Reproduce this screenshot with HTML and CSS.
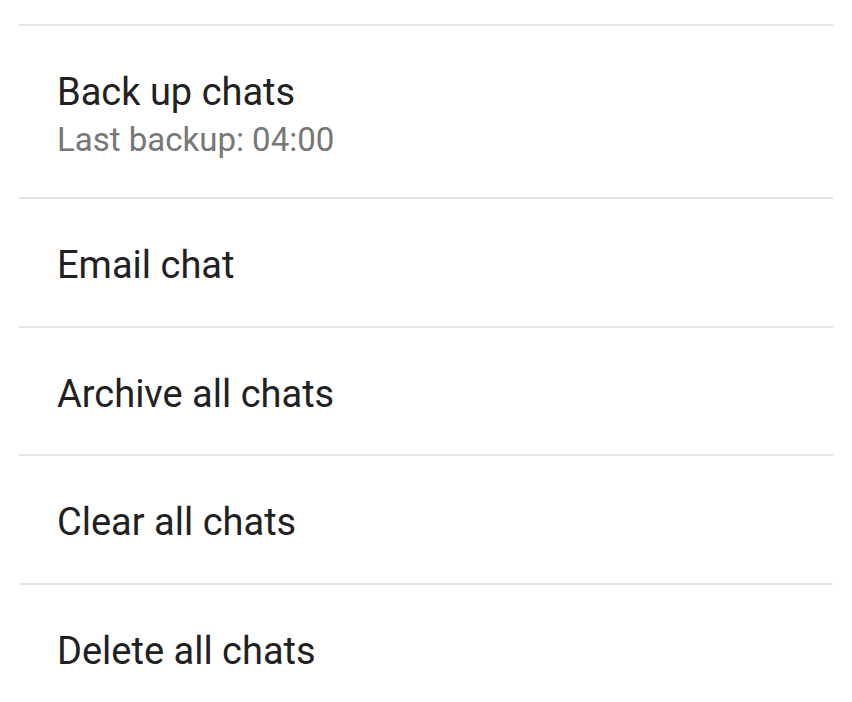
FILE: index.html
```html
<!DOCTYPE html>
<html lang="en">
<head>
    <meta charset="UTF-8">
    <meta name="viewport" content="width=device-width, initial-scale=1.0">
    <title>Chat settings</title>
    <link rel="stylesheet" href="styles.css">
</head>
<body>

<div class="settings-list">
    <div class="setting-item two-line">
        <div class="setting-title">Back up chats</div>
        <div class="setting-summary">Last backup: 04:00</div>
    </div>
    <div class="setting-item">
        <div class="setting-title">Email chat</div>
    </div>
    <div class="setting-item">
        <div class="setting-title">Archive all chats</div>
    </div>
    <div class="setting-item">
        <div class="setting-title">Clear all chats</div>
    </div>
    <div class="setting-item">
        <div class="setting-title">Delete all chats</div>
    </div>
</div>

</body>
</html>
```

FILE: styles.css
```css
body {
    font-family: 'Roboto', 'Noto Sans', sans-serif;
    background-color: #fff;
    margin: 0;
    color: #212121;
}
.settings-list {
    padding: 24px 19px 0 19px;
}
.setting-item {
    display: flex;
    flex-direction: column;
    justify-content: center;
    box-sizing: border-box;
    height: 128.7px;
    padding: 6px 0 0 38px;
    border-top: 2px solid #e3e3e3;
}
.setting-item.two-line {
    height: 173px;
}
.setting-title {
    font-size: 38px;
    line-height: 45px;
}
.setting-summary {
    font-size: 33px;
    line-height: 40px;
    margin-top: 5px;
    color: #777;
}
```
